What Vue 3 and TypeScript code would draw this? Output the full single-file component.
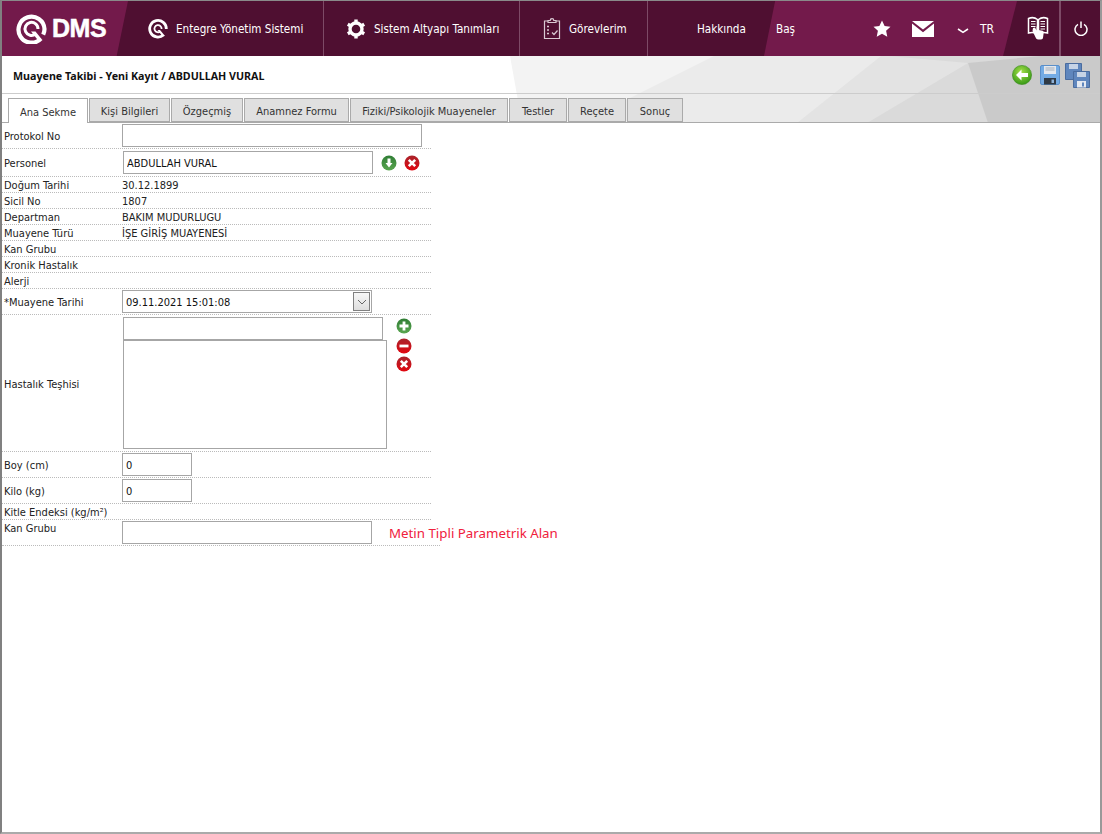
<script setup lang="ts">
interface NavItem {
  label: string
  icon: 'q' | 'gear' | 'task'
  cls: string
}

interface InfoRow {
  label: string
  value?: string
}

const navItems: NavItem[] = [
  { label: 'Entegre Yönetim Sistemi', icon: 'q', cls: 'nav-q' },
  { label: 'Sistem Altyapı Tanımları', icon: 'gear', cls: 'nav-gear' },
  { label: 'Görevlerim', icon: 'task', cls: 'nav-task' }
]

const tabs = [
  { label: 'Ana Sekme', width: 80 },
  { label: 'Kişi Bilgileri', width: 81 },
  { label: 'Özgeçmiş', width: 72 },
  { label: 'Anamnez Formu', width: 105 },
  { label: 'Fiziki/Psikolojik Muayeneler', width: 158 },
  { label: 'Testler', width: 58 },
  { label: 'Reçete', width: 58 },
  { label: 'Sonuç', width: 56 }
]

const infoRows: InfoRow[] = [
  { label: 'Doğum Tarihi', value: '30.12.1899' },
  { label: 'Sicil No', value: '1807' },
  { label: 'Departman', value: 'BAKIM MUDURLUGU' },
  { label: 'Muayene Türü', value: 'İŞE GİRİŞ MUAYENESİ' },
  { label: 'Kan Grubu' },
  { label: 'Kronik Hastalık' },
  { label: 'Alerji' }
]
</script>

<template>
  <div class="page">
    <!-- shared gradients for the round icons -->
    <svg class="defs" width="0" height="0">
      <defs>
        <linearGradient id="greenFill" x1="0" y1="0" x2="0" y2="1">
          <stop offset="0" stop-color="#2f7d34" />
          <stop offset="1" stop-color="#5aa650" />
        </linearGradient>
        <linearGradient id="redFill" x1="0" y1="0" x2="0" y2="1">
          <stop offset="0" stop-color="#a8242c" />
          <stop offset="1" stop-color="#e2060f" />
        </linearGradient>
        <radialGradient id="backFill" cx="45%" cy="35%" r="70%">
          <stop offset="0" stop-color="#a6e04a" />
          <stop offset="1" stop-color="#2f9412" />
        </radialGradient>
      </defs>
    </svg>

    <!-- Top bar -->
    <header class="topbar">
      <div class="accent accent-logo"></div>
      <div class="accent accent-right"></div>

      <div class="logo">
        <svg width="32" height="30" viewBox="0 0 32 30">
          <path d="M25 24.600A13 13 0 1 1 28.500 15a13 13 0 0 1-1.300 5.700" fill="none" stroke="#fff" stroke-width="4.200" />
          <path d="M19.500 20A6.500 6.500 0 1 1 22 15" fill="none" stroke="#fff" stroke-width="3" />
          <path d="M15 17.500h4.500l6 7.500h-4.500z" fill="#fff" />
        </svg>
        <span class="logo-text">DMS</span>
      </div>

      <nav class="nav">
        <a v-for="item in navItems" :key="item.label" class="nav-item" :class="item.cls">
          <svg v-if="item.icon === 'q'" width="20" height="20" viewBox="0 0 20 20">
            <path d="M15.500 16A8.300 8.300 0 1 1 18.300 10" fill="none" stroke="#fff" stroke-width="2.800" />
            <path d="M12.300 12.500A3.600 3.600 0 1 1 13.600 10" fill="none" stroke="#fff" stroke-width="1.800" />
            <path d="M9.500 11h2.500l5 6h-2.800z" fill="#fff" />
          </svg>
          <svg v-else-if="item.icon === 'gear'" width="20" height="20" viewBox="0 0 20 20">
            <circle cx="10" cy="10" r="6" fill="none" stroke="#fff" stroke-width="3.400" />
            <path d="M10 0.500v3.400M10 16.100v3.400M1.800 5.200l3 1.700M15.200 13.100l3 1.700M1.800 14.800l3-1.700M15.200 6.900l3-1.700" stroke="#fff" stroke-width="3.400" />
          </svg>
          <svg v-else width="18" height="22" viewBox="0 0 18 22" fill="none" stroke="#d9c9d2" stroke-width="1.200">
            <path d="M5 3H1.500v17.500h15V3H13" />
            <path d="M5 4.500V2.500h2.200a1.800 1.800 0 0 1 3.600 0H13v2z" />
            <path d="M4 8.500h2M4 12h2M4 15.500h2" stroke-width="1.600" />
            <path d="M9 14.500l2 2 3.500-4" />
          </svg>
          <span>{{ item.label }}</span>
        </a>
      </nav>

      <span class="plain-link about">Hakkında</span>
      <span class="plain-link start">Baş</span>

      <div class="tools">
        <svg width="18" height="17" viewBox="0 0 18 17">
          <path d="M9 0.500l2.600 5.500 5.900.7-4.400 4.100 1.200 6L9 13.800l-5.300 2.900 1.200-6L.5 6.700l5.900-.7z" fill="#fff" />
        </svg>
        <svg class="mail" width="22" height="16" viewBox="0 0 22 16">
          <path d="M0 0h22L11 8.600z" fill="#fff" />
          <path d="M0 2.600l11 8.600 11-8.600V16H0z" fill="#fff" />
        </svg>
        <svg class="chevron" width="12" height="6" viewBox="0 0 12 6">
          <path d="M1 1l5 3.400L11 1" fill="none" stroke="#fff" stroke-width="1.600" />
        </svg>
        <span class="lang">TR</span>
      </div>

      <svg class="book" width="24" height="26" viewBox="0 0 24 26">
        <path d="M1.500 2.500C5 1 8 1.500 10.500 3.500V18C8 16.500 5 16 1.500 17z" fill="none" stroke="#fff" stroke-width="1.500" />
        <path d="M20.500 2.500C17 1 14 1.500 11.500 3.500V18c2.500-1.500 5.500-2 9-1z" fill="none" stroke="#fff" stroke-width="1.500" />
        <path d="M4 5.500h4.500M4 8h4.500M4 10.500h4.500M13.500 5.500H18M13.500 8H18M13.500 10.500H18M13.500 13H18" stroke="#fff" stroke-width="1" />
        <path d="M6 12l2-.5 1.500 3V11c0-1.500 2-1.500 2 0v3l4 .8c1 .2 1.300 1 1.200 2l-.7 5c-.2 1-.8 1.700-2 1.700H11c-1 0-1.500-.5-2-1.200L5.500 15z" fill="#fff" />
      </svg>

      <div class="power">
        <svg width="14" height="15" viewBox="0 0 14 15">
          <path d="M4 3.300a6 6 0 1 0 6 0" fill="none" stroke="#fff" stroke-width="1.500" />
          <path d="M7 0.500v6.500" stroke="#fff" stroke-width="1.500" />
        </svg>
      </div>
    </header>

    <!-- Title and tabs sit on the faceted background -->
    <section class="head">
      <svg class="facets" width="1098" height="66" viewBox="2 0 1098 66">
        <path d="M510 0H1102V67H522z" fill="#f3f3f3" />
        <path d="M714 0H1102V67H580z" fill="#ebebeb" />
        <path d="M881 0H1102V67H797z" fill="#e3e3e3" />
        <path d="M968 7L889 0H1102V67H867z" fill="#dadada" />
        <path d="M968 7L1040 0H1102V67H988z" fill="#cacaca" />
      </svg>
      <div class="title-row">
        <h1 class="title">Muayene Takibi - Yeni Kayıt / ABDULLAH VURAL</h1>
        <div class="actions">
          <svg width="20" height="20" viewBox="0 0 20 20">
            <circle cx="10" cy="10" r="9.600" fill="url(#backFill)" stroke="#3c8a1e" stroke-width=".6" />
            <path d="M9.500 4.500L4 10l5.500 5.500v-3.500H16V8H9.500z" fill="#fff" />
          </svg>
          <svg width="20" height="20" viewBox="0 0 20 20">
            <path d="M.5 2a1.500 1.500 0 0 1 1.500-1.500h16A1.500 1.500 0 0 1 19.500 2v16a1.500 1.500 0 0 1-1.500 1.500H2A1.500 1.500 0 0 1 .5 18z" fill="#74abe4" stroke="#5b8fc9" />
            <path d="M4 1h12v8H4z" fill="#e4e8ee" />
            <path d="M5.500 3h9M5.500 5h9" stroke="#a5adb8" />
            <path d="M4 13h12v6.500H4z" fill="#2f3a46" />
            <path d="M11.500 14.500h2.500v3.500h-2.500z" fill="#8fb2d8" />
          </svg>
          <svg class="save-all" width="25" height="25" viewBox="0 0 25 25">
            <path d="M.5.500h16v16H.5z" fill="#5f86bd" stroke="#4a6c9f" />
            <path d="M4 1h9v5H4z" fill="#c7d4e6" />
            <path d="M8.500 8.500h16v16h-16z" fill="#5f86bd" stroke="#4a6c9f" />
            <path d="M12 9h9v5h-9z" fill="#c7d4e6" />
            <path d="M12 18h9v6.500h-9z" fill="#e4e9f1" />
            <path d="M17 19.500h2v4h-2z" fill="#5f86bd" />
          </svg>
        </div>
      </div>
      <div class="tabs">
        <span
          v-for="(tab, i) in tabs"
          :key="tab.label"
          class="tab"
          :class="{ active: i === 0 }"
          :style="{ width: tab.width + 'px' }"
        >{{ tab.label }}</span>
      </div>
    </section>

    <!-- Form -->
    <main class="content">
      <div class="form">
        <div class="row row-protokol">
          <label>Protokol No</label>
          <input class="field f-protokol" type="text" />
        </div>
        <div class="row row-personel">
          <label>Personel</label>
          <input class="field f-personel" type="text" value="ABDULLAH VURAL" />
          <svg class="ico-down" width="16" height="16" viewBox="0 0 16 16">
            <circle cx="8" cy="8" r="7.500" fill="url(#greenFill)" />
            <path d="M6.500 3.500h3V8h2L8 12.500 4.500 8h2z" fill="#fff" />
          </svg>
          <svg class="ico-clear" width="16" height="16" viewBox="0 0 16 16">
            <circle cx="8" cy="8" r="7.500" fill="url(#redFill)" />
            <path d="M4.800 4.800l6.400 6.400M11.200 4.800l-6.400 6.400" stroke="#fff" stroke-width="2.600" />
          </svg>
        </div>
        <div v-for="info in infoRows" :key="info.label" class="row row-info">
          <label>{{ info.label }}</label>
          <span class="value">{{ info.value }}</span>
        </div>
        <div class="row row-date">
          <label>*Muayene Tarihi</label>
          <div class="date-box">
            <span class="date-text">09.11.2021 15:01:08</span>
            <span class="date-btn">
              <svg width="10" height="6" viewBox="0 0 10 6">
                <path d="M1 1l4 4 4-4" fill="none" stroke="#666" stroke-width="1" />
              </svg>
            </span>
          </div>
        </div>
        <div class="row row-diag">
          <label>Hastalık Teşhisi</label>
          <div class="diag-fields">
            <input class="field f-diag" type="text" />
            <textarea class="field f-area"></textarea>
          </div>
          <div class="diag-icons">
            <svg width="16" height="16" viewBox="0 0 16 16">
              <circle cx="8" cy="8" r="7.500" fill="url(#greenFill)" />
              <path d="M8 3.500v9M3.500 8h9" stroke="#fff" stroke-width="2.800" />
            </svg>
            <svg width="16" height="16" viewBox="0 0 16 16">
              <circle cx="8" cy="8" r="7.500" fill="url(#redFill)" />
              <path d="M3.500 8h9" stroke="#fff" stroke-width="2.800" />
            </svg>
            <svg width="16" height="16" viewBox="0 0 16 16">
              <circle cx="8" cy="8" r="7.500" fill="url(#redFill)" />
              <path d="M4.800 4.800l6.400 6.400M11.200 4.800l-6.400 6.400" stroke="#fff" stroke-width="2.600" />
            </svg>
          </div>
        </div>
        <div class="row row-num">
          <label>Boy (cm)</label>
          <input class="field f-num" type="text" value="0" />
        </div>
        <div class="row row-num">
          <label>Kilo (kg)</label>
          <input class="field f-num" type="text" value="0" />
        </div>
        <div class="row row-info">
          <label>Kitle Endeksi (kg/m²)</label>
        </div>
        <div class="row row-param">
          <label>Kan Grubu</label>
          <input class="field f-param" type="text" />
          <span class="param-note">Metin Tipli Parametrik Alan</span>
        </div>
      </div>
    </main>
  </div>
</template>

<style>
html,
body {
  margin: 0;
  background: #fff;
}
</style>

<style scoped>
.page {
  width: 1102px;
  height: 834px;
  box-sizing: border-box;
  border-top: 1px solid #8a8a8a;
  border-left: 2px solid #808080;
  border-right: 2px solid #999;
  border-bottom: 2px solid #aaa;
  overflow: hidden;
  display: flex;
  flex-direction: column;
  font-family: "DejaVu Sans", "Noto Sans", sans-serif;
  font-stretch: condensed;
  font-size: 11px;
  color: #222;
  background: #fff;
}

.defs {
  position: absolute;
}

/* Top bar */
.topbar {
  position: relative;
  height: 55px;
  flex: none;
  display: flex;
  align-items: center;
  background: #4f0f31;
  color: #fff;
  font-size: 11.6px;
}

.accent {
  position: absolute;
  top: 0;
  bottom: 0;
  background: #731a4b;
}

.accent-logo {
  left: 0;
  width: 126px;
  clip-path: polygon(0 0, 100% 0, 91% 100%, 0 100%);
}

.accent-right {
  left: 762px;
  width: 253px;
  clip-path: polygon(4.4% 0, 100% 0, 94.5% 100%, 0 100%);
}

.logo {
  position: relative;
  width: 130px;
  flex: none;
  padding-left: 14px;
  box-sizing: border-box;
  display: flex;
  align-items: center;
  gap: 4px;
}

.logo-text {
  font-family: "Liberation Sans", sans-serif;
  font-stretch: normal;
  font-weight: 700;
  font-size: 25px;
  letter-spacing: -0.5px;
  -webkit-text-stroke: 0.5px #fff;
}

.nav {
  position: relative;
  display: flex;
  height: 100%;
  flex: none;
}

.nav-item {
  display: flex;
  align-items: center;
  gap: 8px;
  height: 100%;
  box-sizing: border-box;
  border-right: 1px solid #7d4a66;
  white-space: nowrap;
}

.nav-q {
  width: 192px;
  padding-left: 16px;
}

.nav-gear {
  width: 196px;
  padding-left: 22px;
}

.nav-task {
  width: 128px;
  padding-left: 23px;
}

.plain-link {
  position: relative;
  flex: none;
}

.about {
  width: 79px;
  margin-left: 49px;
}

.start {
  width: 98px;
}

.tools {
  position: relative;
  width: 153px;
  flex: none;
  display: flex;
  align-items: center;
  margin-left: -1px;
}

.mail {
  margin-left: 21px;
}

.chevron {
  margin-left: 23px;
  margin-top: 5px;
}

.lang {
  margin-left: 11px;
  font-size: 12px;
}

.book {
  position: relative;
  flex: none;
  margin-left: 1px;
}

.power {
  position: relative;
  height: 100%;
  margin-left: 8px;
  padding-left: 13px;
  border-left: 2px solid #7d4a66;
  display: flex;
  align-items: center;
}

/* Head area */
.head {
  position: relative;
  height: 67px;
  flex: none;
  box-sizing: border-box;
  border-bottom: 1px solid #aaa;
}

.facets {
  position: absolute;
  top: 0;
  left: 0;
}

.title-row {
  position: relative;
  height: 38px;
  box-sizing: border-box;
  border-bottom: 1px solid #ccc;
  display: flex;
  align-items: center;
  justify-content: space-between;
  padding: 0 10px 0 11px;
}

.title {
  margin: 2px 0 0;
  font-family: "Noto Sans", sans-serif;
  font-size: 10.7px;
  font-weight: 700;
  color: #111;
}

.actions {
  display: flex;
  align-items: flex-start;
  gap: 8px;
  padding-top: 3px;
  padding-left: 1px;
}

.save-all {
  margin-left: -3px;
  margin-top: -2px;
}

.tabs {
  position: relative;
  display: flex;
  gap: 1px;
  margin-top: 4px;
  padding-left: 6px;
}

.tab {
  height: 24px;
  box-sizing: border-box;
  border: 1px solid #aaa;
  background: #e0e0e0;
  color: #333;
  padding-top: 2px;
  display: flex;
  align-items: center;
  justify-content: center;
  white-space: nowrap;
}

.tab.active {
  height: 25px;
  background: #fff;
  border-bottom: none;
}

/* Form */
.content {
  flex: 1;
}

.form {
  width: 429px;
}

.row {
  display: flex;
  align-items: center;
  border-bottom: 1px dotted #bbb;
  box-sizing: border-box;
}

.row label {
  width: 118px;
  padding-left: 2px;
  padding-top: 2px;
  flex: none;
}

.value {
  padding-top: 2px;
}

.field {
  box-sizing: border-box;
  flex: none;
  border: 1px solid #a6a6a6;
  background: #fff;
  font: inherit;
  color: #111;
  margin: 0;
  padding: 2px 3px 0;
  outline: none;
  display: block;
  border-radius: 0;
}

.row-protokol {
  height: 26px;
}

.f-protokol {
  width: 300px;
  height: 23px;
}

.row-personel {
  height: 28px;
}

.f-personel {
  width: 250px;
  height: 23px;
  margin-left: 1px;
}

.ico-down {
  margin-left: 8px;
}

.ico-clear {
  margin-left: 7px;
}

.row-info {
  height: 16px;
}

.row-date {
  height: 26px;
}

.date-box {
  width: 250px;
  height: 23px;
  box-sizing: border-box;
  border: 1px solid #a6a6a6;
  display: flex;
  align-items: center;
  justify-content: space-between;
  padding: 0 1px 0 3px;
  color: #111;
}

.date-text {
  padding-top: 2px;
}

.date-btn {
  width: 17px;
  height: 19px;
  box-sizing: border-box;
  border: 1px solid #808080;
  background: linear-gradient(#f7f7f7, #dedede);
  display: flex;
  align-items: center;
  justify-content: center;
}

.row-diag {
  height: 137px;
  align-items: flex-start;
}

.row-diag label {
  align-self: center;
}

.diag-fields {
  padding-top: 2px;
  margin-left: 1px;
}

.f-diag {
  width: 260px;
  height: 23px;
}

.f-area {
  width: 264px;
  height: 109px;
  resize: none;
}

.diag-icons {
  display: flex;
  flex-direction: column;
  margin-left: 9px;
  padding-top: 3px;
}

.diag-icons svg:nth-child(2) {
  margin-top: 4px;
}

.diag-icons svg:nth-child(3) {
  margin-top: 2px;
}

.row-num {
  height: 26px;
}

.f-num {
  width: 70px;
  height: 23px;
}

.row-param {
  width: 438px;
  height: 26px;
}

.row-param label {
  align-self: flex-start;
}

.f-param {
  width: 250px;
  height: 23px;
}

.param-note {
  margin-left: 17px;
  font-family: "Noto Sans", sans-serif;
  font-stretch: normal;
  font-size: 13.3px;
  color: #f0203c;
  white-space: nowrap;
}
</style>
